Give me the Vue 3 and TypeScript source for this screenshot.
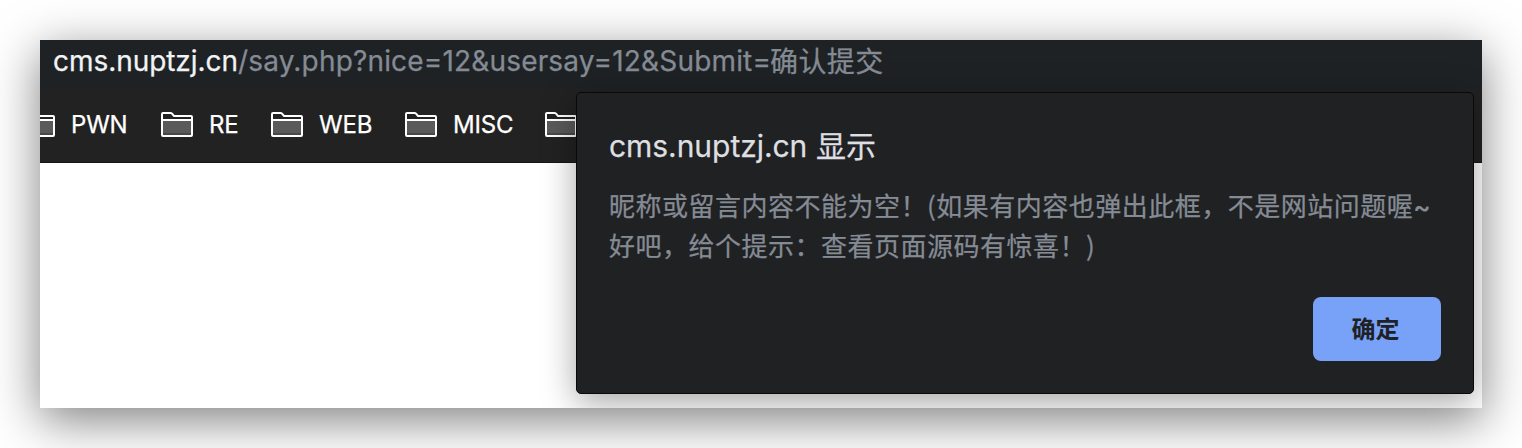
<script setup lang="ts">
interface Bookmark {
  label: string
  key: string
}

const host = 'cms.nuptzj.cn'
const path = '/say.php?nice=12&usersay=12&Submit='
const submitValue = '确认提交'

const bookmarks: Bookmark[] = [
  { label: 'PWN', key: 'pwn' },
  { label: 'RE', key: 're' },
  { label: 'WEB', key: 'web' },
  { label: 'MISC', key: 'misc' },
  { label: '', key: 'more' },
]

const messageLines: string[] = [
  '昵称或留言内容不能为空！(如果有内容也弹出此框，不是网站问题喔',
  '好吧，给个提示：查看页面源码有惊喜！)',
]
</script>

<template>
  <main class="stage">
    <div class="window">
      <header class="address">
        <span class="host">{{ host }}</span><span class="path">{{ path }}</span><span class="value">{{ submitValue }}</span>
      </header>
      <nav class="bookmarks">
        <div v-for="b in bookmarks" :key="b.key" class="bookmark" :class="b.key">
          <svg class="folder" width="32" height="26" viewBox="0 0 32 26">
            <path d="M1 8H31V24H1Z" fill="#5a5a5a" />
            <path d="M1 21H31V24H1Z" fill="#484848" />
            <path
              d="M1 2Q1 1 2 1H9.5Q10.4 1 11 1.7L13 4H30Q31 4 31 5V23Q31 24 30 24H2Q1 24 1 23Z M1 8H31"
              fill="none" stroke="#fff" stroke-width="2"
            />
          </svg>
          <span class="label">{{ b.label }}</span>
        </div>
      </nav>
      <section class="page"></section>
      <div class="dialog" role="alertdialog">
        <h1 class="title"><span class="origin">{{ host }}</span><span>显示</span></h1>
        <p class="message">
          <span v-for="(line, i) in messageLines" :key="line" class="line">{{ line }}<span v-if="i === 0" class="tilde">~</span></span>
        </p>
        <button class="confirm" type="button">确定</button>
      </div>
    </div>
  </main>
</template>

<style>
body {
  background: #fff;
  overflow: hidden;
}
</style>

<style scoped>
.stage {
  box-sizing: border-box;
  width: 1522px;
  height: 448px;
  padding: 40px;
  overflow: hidden;
  font-family: Inter, "Noto Sans CJK SC", sans-serif;
  -webkit-text-stroke: 0.25px currentColor;
}
.window {
  position: relative;
  display: flex;
  flex-direction: column;
  width: 1442px;
  height: 368px;
  background: #fff;
  box-shadow: 0 12px 46px rgba(0, 0, 0, 0.5);
}
.address {
  box-sizing: border-box;
  display: flex;
  height: 48px;
  padding-left: 13px;
  background: #1e2225;
  font-size: 28px;
  line-height: 43px;
  white-space: nowrap;
}
.host {
  width: 185px;
  color: #f2f3f4;
  letter-spacing: -0.05px;
}
.path {
  width: 532px;
  color: #858b94;
  letter-spacing: 0.17px;
}
.value {
  color: #858b94;
  line-height: 44px;
  letter-spacing: 0.4px;
}
.bookmarks {
  box-sizing: border-box;
  display: flex;
  align-items: center;
  height: 75px;
  border-bottom: 1px solid #161616;
  background: #222;
  overflow: hidden;
}
.bookmark {
  display: flex;
  flex: none;
  align-items: center;
}
.pwn {
  width: 138px;
  margin-left: -17px;
}
.re {
  width: 110px;
}
.web {
  width: 134px;
}
.misc {
  width: 140px;
}
.folder {
  flex: none;
}
.label {
  margin-left: 16px;
  color: #fff;
  font-size: 24px;
  line-height: 30px;
  letter-spacing: -0.2px;
}
.page {
  flex: 1;
}
.dialog {
  position: absolute;
  top: 52px;
  left: 536px;
  box-sizing: border-box;
  display: flex;
  flex-direction: column;
  width: 898px;
  height: 302px;
  padding: 33px 32px 32px;
  border: 1px solid #08090a;
  border-radius: 5px;
  background: #202123;
  clip-path: inset(-52px -8px -14px -80px);
  box-shadow: 0 8px 34px rgba(0, 0, 0, 0.36);
}
.title {
  display: flex;
  margin: 0;
  color: #dedfe0;
  font-size: 30px;
  font-weight: 400;
  line-height: 40px;
}
.origin {
  width: 207px;
  line-height: 41px;
  letter-spacing: -0.05px;
}
.message {
  display: flex;
  flex-direction: column;
  margin: 18px 0 0;
  color: #858b94;
  font-family: "Noto Sans CJK SC", sans-serif;
  font-size: 26px;
  line-height: 40px;
  letter-spacing: 0.5px;
  white-space: nowrap;
}
.line {
  height: 40px;
}
.tilde {
  font-family: Inter, sans-serif;
  font-weight: 500;
}
.confirm {
  align-self: flex-end;
  width: 128px;
  height: 64px;
  margin-top: auto;
  padding: 0 3px 4px 0;
  border: 0;
  border-radius: 8px;
  background: #78a1f8;
  color: #202124;
  font-family: "Noto Sans CJK SC", sans-serif;
  font-size: 24px;
  font-weight: 700;
  -webkit-text-stroke: 0;
}
</style>
